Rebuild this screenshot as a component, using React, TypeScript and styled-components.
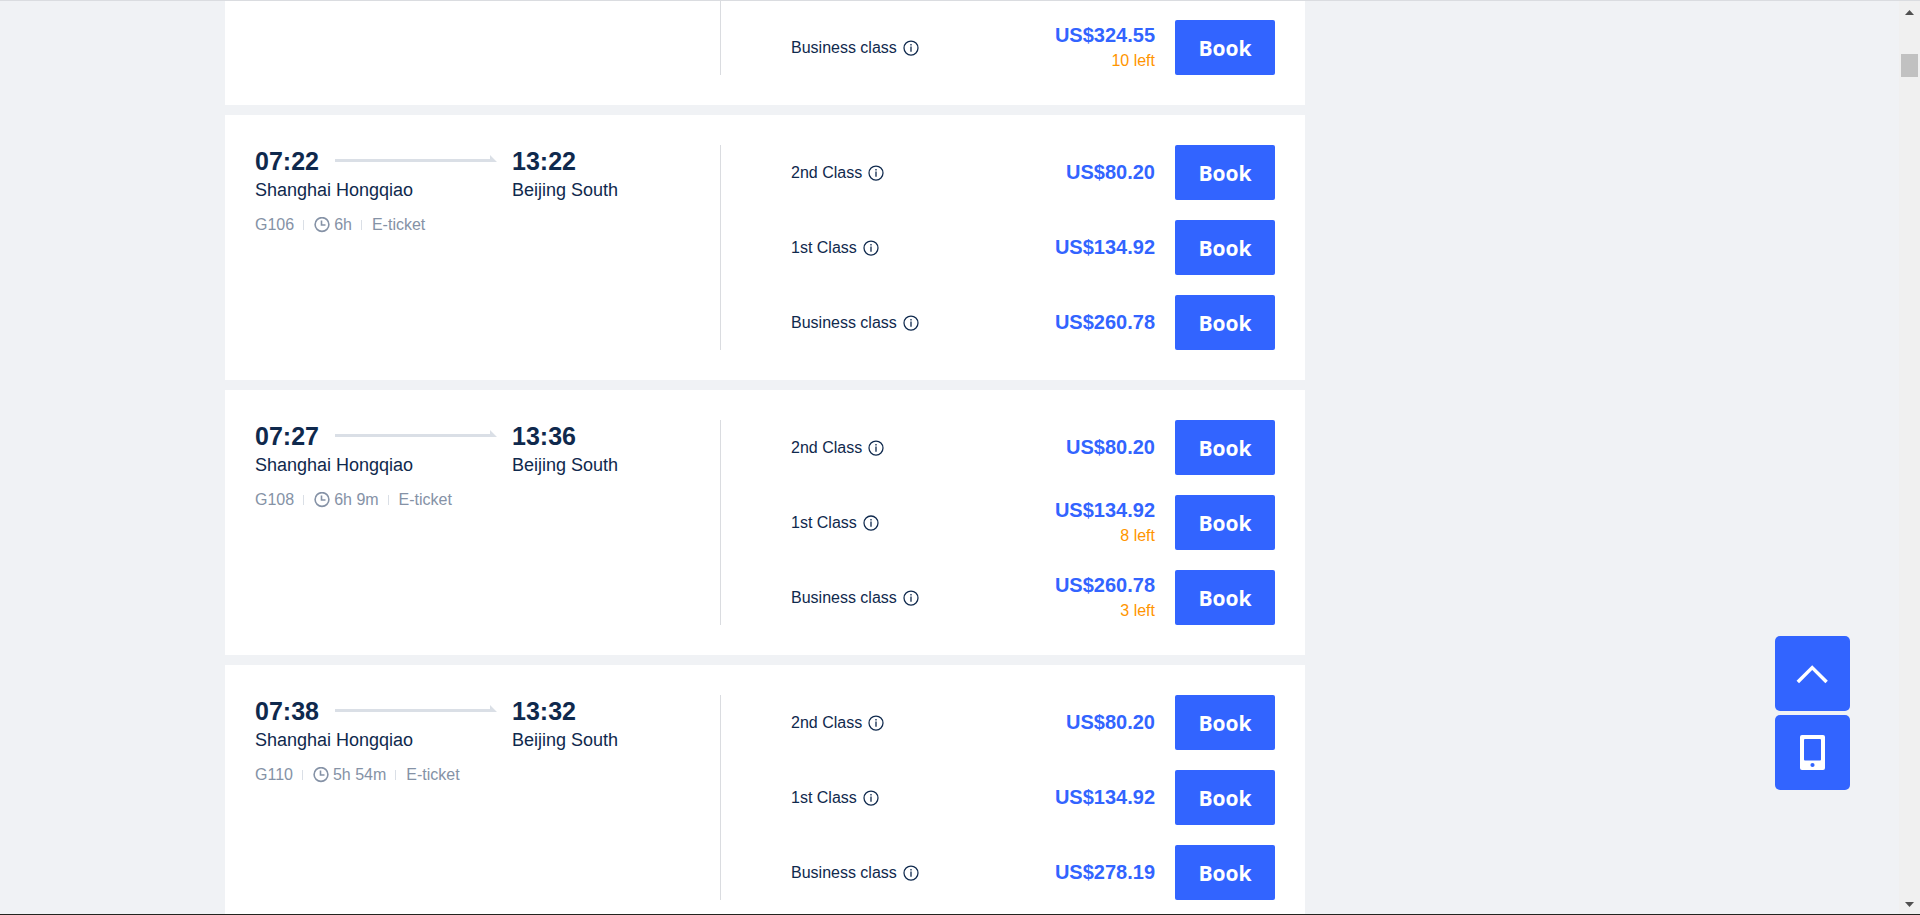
import React from 'react';
import styled, { createGlobalStyle } from 'styled-components';

const GlobalStyle = createGlobalStyle`
  * { box-sizing: border-box; }
  body {
    margin: 0;
    background: #f0f2f5;
    color: #0f294d;
    font-family: "Liberation Sans", Arial, sans-serif;
    font-size: 16px;
  }
`;

const Screen = styled.div`
  display: flex;
  height: 100vh;
  overflow: hidden;
  border-top: 1px solid #dadce0;
  border-bottom: 1px solid #24241f;
`;

const Page = styled.div`
  flex: 1;
  min-width: 0;
`;

const Container = styled.div`
  display: grid;
  grid-template-columns: minmax(0, 1080px) minmax(0, 369px);
  max-width: 1449px;
  margin: 0 auto;
`;

const TrainList = styled.main`
  display: flex;
  flex-direction: column;
  gap: 10px;
`;

const Card = styled.article<{ $continued?: boolean }>`
  display: grid;
  grid-template-columns: 465px minmax(0, 1fr);
  padding: ${p => (p.$continued ? '0 30px 30px' : '30px')};
  background: #fff;
`;

const Journey = styled.section`
  padding-right: 46px;
`;

const Stops = styled.div`
  display: grid;
  grid-template-columns: 80px 177px 1fr;
  white-space: nowrap;
`;

const Time = styled.div`
  font-size: 25px;
  font-weight: 700;
  line-height: 32px;
`;

const Station = styled.div<{ $span?: number }>`
  grid-column: span ${p => p.$span ?? 1};
  font-size: 18px;
  line-height: 26px;
`;

const Track = styled.svg`
  display: block;
  width: 162px;
  height: 8px;
  margin-top: 10px;
  fill: #dadfe6;
`;

const Details = styled.div`
  display: flex;
  align-items: center;
  margin-top: 12px;
  color: #8592a6;
  line-height: 20px;
`;

const Detail = styled.span`
  display: flex;
  align-items: center;
  gap: 4px;

  & + &::before {
    content: "";
    width: 1px;
    height: 10px;
    margin: 0 6px 0 9px;
    background: #dadfe6;
  }
`;

const Fares = styled.section<{ $continued?: boolean }>`
  display: flex;
  flex-direction: column;
  gap: 20px;
  padding: ${p => (p.$continued ? '19px 0 0 70px' : '0 0 0 70px')};
  border-left: 1px solid #dadce0;
`;

const FareRow = styled.div`
  display: flex;
  align-items: center;
  height: 55px;
`;

const FareClass = styled.span`
  display: flex;
  align-items: center;
  flex: 1;
  gap: 6px;
`;

const InfoButton = styled.button`
  display: flex;
  padding: 0;
  border: 0;
  background: none;
  color: inherit;
  cursor: pointer;
`;

const PriceBlock = styled.div`
  margin-right: 20px;
  line-height: 25px;
  text-align: right;
`;

const Price = styled.div`
  color: #3264ff;
  font-size: 20px;
  font-weight: 700;
`;

const SeatsLeft = styled.div`
  color: #ff9500;
`;

const BookButton = styled.button`
  width: 100px;
  height: 55px;
  padding: 0;
  border: 0;
  border-radius: 2px;
  background: #3264ff;
  color: #fff;
  font: 700 21px "Open Sans", "Noto Sans", sans-serif;
  cursor: pointer;
`;

const FloatingTools = styled.nav`
  position: fixed;
  right: 70px;
  bottom: 125px;
  display: flex;
  flex-direction: column;
  gap: 4px;
`;

const ToolButton = styled.button`
  display: flex;
  align-items: center;
  justify-content: center;
  width: 75px;
  height: 75px;
  padding: 0;
  border: 0;
  border-radius: 5px;
  background: #3264ff;
  cursor: pointer;
`;

const ScrollTrack = styled.div`
  display: flex;
  flex: 0 0 21px;
  flex-direction: column;
  align-items: center;
  padding: 9px 0 7px;
  background: #f0f0f0;
`;

const ScrollThumb = styled.div`
  width: 17px;
  height: 23px;
  margin: 39px 0 auto;
  background: #c1c1c1;
`;

const ScrollArrow = ({ down }: { down?: boolean }) => (
  <svg width="9" height="5" viewBox="0 0 9 5" fill="#505050" aria-hidden="true">
    <path d={down ? 'M0 0h9L4.500 5z' : 'M0 5h9L4.500 0z'} />
  </svg>
);

const ClockIcon = () => (
  <svg width="16" height="16" viewBox="0 0 16 16" fill="none" stroke="currentColor" aria-hidden="true">
    <circle cx="8" cy="7.500" r="6.900" strokeWidth="1.600" />
    <path d="M7.500 3.500v4.500h4" strokeWidth="1.600" />
  </svg>
);

const InfoIcon = () => (
  <svg width="16" height="16" viewBox="0 0 16 16" fill="none" stroke="currentColor" aria-hidden="true">
    <circle cx="8" cy="8" r="7" strokeWidth="1.250" />
    <path d="M8 6.600v5.200M8 4v1.400" strokeWidth="1.300" />
  </svg>
);

interface Fare {
  name: string;
  price: string;
  left?: number;
}

interface Train {
  number: string;
  departs: string;
  arrives: string;
  duration: string;
  fares: Fare[];
}

const trains: Train[] = [
  {
    number: 'G106', departs: '07:22', arrives: '13:22', duration: '6h',
    fares: [
      { name: '2nd Class', price: '80.20' },
      { name: '1st Class', price: '134.92' },
      { name: 'Business class', price: '260.78' },
    ],
  },
  {
    number: 'G108', departs: '07:27', arrives: '13:36', duration: '6h 9m',
    fares: [
      { name: '2nd Class', price: '80.20' },
      { name: '1st Class', price: '134.92', left: 8 },
      { name: 'Business class', price: '260.78', left: 3 },
    ],
  },
  {
    number: 'G110', departs: '07:38', arrives: '13:32', duration: '5h 54m',
    fares: [
      { name: '2nd Class', price: '80.20' },
      { name: '1st Class', price: '134.92' },
      { name: 'Business class', price: '278.19' },
    ],
  },
];

const FareLine = ({ fare }: { fare: Fare }) => (
  <FareRow>
    <FareClass>
      {fare.name}
      <InfoButton type="button" aria-label={`About ${fare.name}`}><InfoIcon /></InfoButton>
    </FareClass>
    <PriceBlock>
      <Price>{`US$${fare.price}`}</Price>
      {fare.left !== undefined && <SeatsLeft>{`${fare.left} left`}</SeatsLeft>}
    </PriceBlock>
    <BookButton type="button">Book</BookButton>
  </FareRow>
);

const TrainCard = ({ train }: { train: Train }) => (
  <Card>
    <Journey>
      <Stops>
        <Time>{train.departs}</Time>
        <Track viewBox="0 0 162 8" aria-hidden="true">
          <path d="M0 4h155V0l7 7H0z" />
        </Track>
        <Time>{train.arrives}</Time>
        <Station $span={2}>Shanghai Hongqiao</Station>
        <Station>Beijing South</Station>
      </Stops>
      <Details>
        <Detail>{train.number}</Detail>
        <Detail><ClockIcon />{train.duration}</Detail>
        <Detail>E-ticket</Detail>
      </Details>
    </Journey>
    <Fares>
      {train.fares.map(fare => <FareLine key={fare.name} fare={fare} />)}
    </Fares>
  </Card>
);

export default function App() {
  return (
    <>
      <GlobalStyle />
      <Screen>
        <Page>
          <Container>
            <TrainList>
              <Card $continued>
                <Journey />
                <Fares $continued>
                  <FareLine fare={{ name: 'Business class', price: '324.55', left: 10 }} />
                </Fares>
              </Card>
              {trains.map(train => <TrainCard key={train.number} train={train} />)}
            </TrainList>
          </Container>
        </Page>
        <ScrollTrack aria-hidden="true">
          <ScrollArrow />
          <ScrollThumb />
          <ScrollArrow down />
        </ScrollTrack>
      </Screen>
      <FloatingTools aria-label="Page tools">
        <ToolButton type="button" aria-label="Back to top">
          <svg width="33" height="20" viewBox="0 0 33 20" fill="none" stroke="#fff" strokeWidth="3.500" aria-hidden="true">
            <path d="M1.800 18L16.200 3.600 30.600 18" />
          </svg>
        </ToolButton>
        <ToolButton type="button" aria-label="Get the app">
          <svg width="25" height="35" viewBox="0 0 25 35" aria-hidden="true">
            <rect width="25" height="35" rx="2" fill="#fff" />
            <rect x="4" y="4" width="17" height="21.500" rx="1" fill="#3264ff" />
            <circle cx="12.500" cy="30" r="2.100" fill="#3264ff" />
          </svg>
        </ToolButton>
      </FloatingTools>
    </>
  );
}
